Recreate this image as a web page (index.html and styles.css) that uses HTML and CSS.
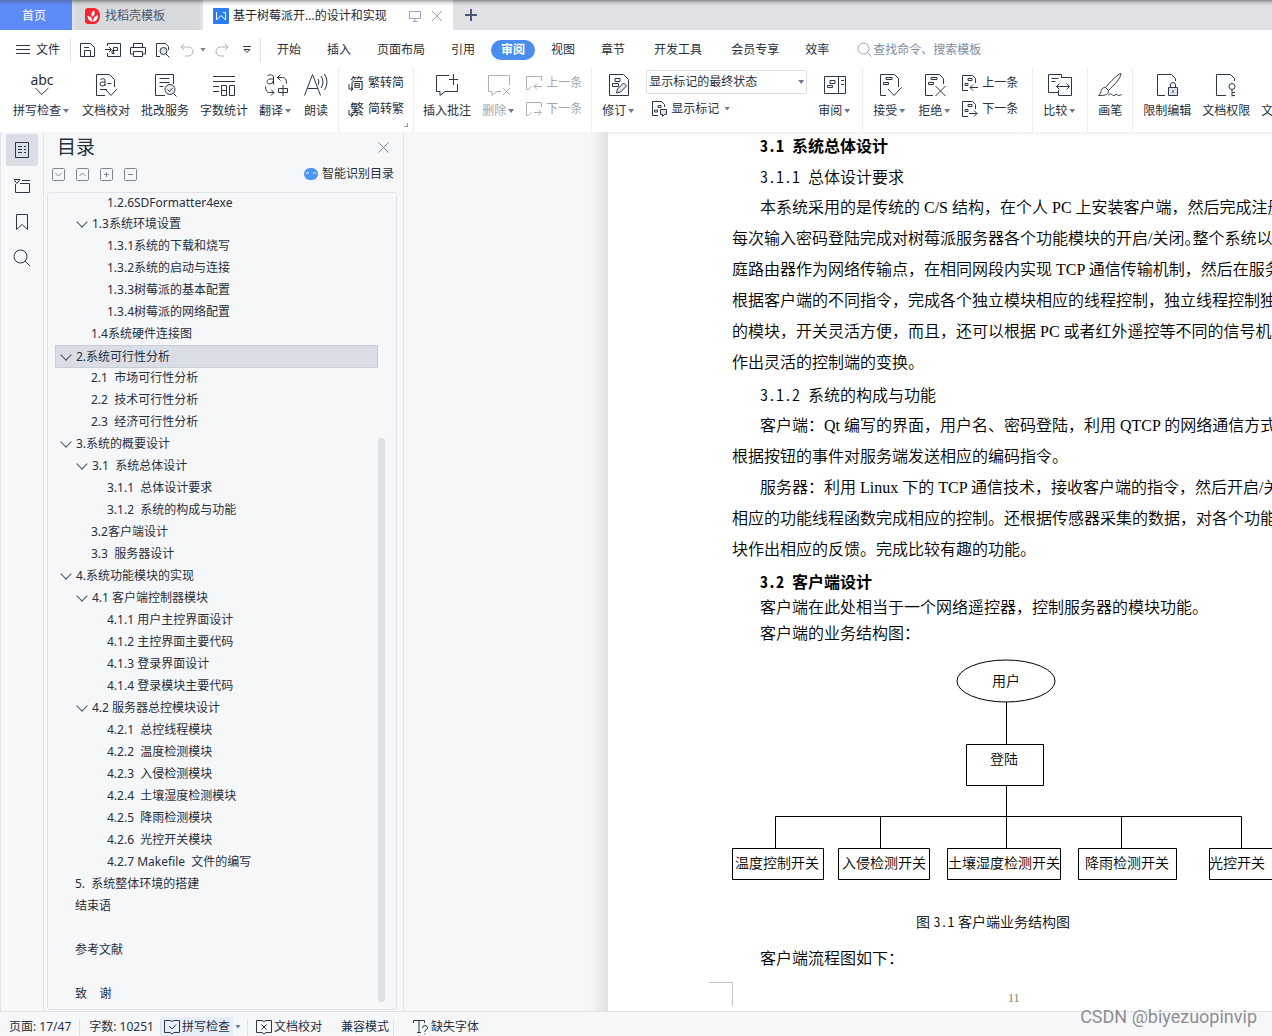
FILE: index.html
```html
<!DOCTYPE html>
<html lang="zh-CN">
<head>
<meta charset="utf-8">
<title>基于树莓派开发的设计和实现</title>
<link rel="stylesheet" href="styles.css">
</head>
<body>
<div class="app">
  <header class="tabstrip">
    <button class="tab home">首页</button>
    <button class="tab docer">
      <svg width="16" height="16" viewBox="0 0 16 16"><path d="M3 0h6a6 8 0 010 16H3a3 3 0 01-3-3V3a3 3 0 013-3z" fill="#f5242e"/><path d="M7.500 14C4 13 2.500 10.500 2.500 8 5.500 8.500 7.500 10 7.500 14ZM7 9C5.500 6.500 6.500 4 9 2.500 10.500 5 9.500 7.500 7 9ZM8 14C8 10.500 9.500 8 13 7 13 10.500 11.500 13 8 14Z" fill="#fff"/></svg>
      找稻壳模板
    </button>
    <div class="tab current">
      <svg width="16" height="16" viewBox="0 0 16 16"><rect width="16" height="16" rx="1" fill="#2b7cf0"/><path d="M3.500 4v8l4.500-4.500 4.500 4.500V4.500H10" fill="none" stroke="#fff"/></svg>
      <span class="tab-title">基于树莓派开...的设计和实现</span>
      <svg class="faint" width="12" height="12" viewBox="0 0 12 12"><path d="M.5 1.500h11v7H.5zM6 8.500v3M3.500 11.500h5"/></svg>
      <button class="plain" aria-label="关闭标签"><svg class="faint" width="12" height="12" viewBox="0 0 12 12"><path d="M1 1l10 10M11 1L1 11"/></svg></button>
    </div>
    <button class="plain add" aria-label="新建标签"><svg width="12" height="12" viewBox="0 0 12 12"><path d="M6 0v12M0 6h12" stroke="#4b5875" stroke-width="2"/></svg></button>
  </header>

  <nav class="menubar">
    <button class="plain file"><svg width="14" height="12" viewBox="0 0 14 12"><path d="M0 1.500h14M0 5.500h14M0 9.500h14"/></svg>文件</button>
    <div class="quick">
      <button class="plain" aria-label="保存"><svg width="16" height="16" viewBox="0 0 16 16"><path d="M.5 1.500h10l4 4v9H.5zM4.500 14V8.500h6V14M4 5.500h5"/></svg></button>
      <button class="plain" aria-label="输出为PDF"><svg width="16" height="16" viewBox="0 0 16 16"><path d="M2.500 4V1.500h13v13h-13V11M0 7.500h6M4 5l2.500 2.500L4 10M8.500 12V5.500h4v3H7v3h2.500"/></svg></button>
      <button class="plain" aria-label="打印"><svg width="16" height="16" viewBox="0 0 16 16"><path d="M3.500 5V1.500h9V5M3.500 12h-3V5.500h15V12h-3M3.500 9.500h9v5h-9z"/></svg></button>
      <button class="plain" aria-label="打印预览"><svg width="16" height="16" viewBox="0 0 16 16"><path d="M5 14.500H1.500v-13h9l3 3V8"/><circle cx="8.500" cy="9" r="3.500" fill="#dde0e5"/><path d="M11 12l3.500 3.500"/></svg></button>
      <button class="plain off" aria-label="撤销"><svg width="14" height="14" viewBox="0 0 14 14"><path d="M4 1L1 4l3 3M1 4h7.500a4.500 4.500 0 010 9H5"/></svg></button>
      <i class="caret"></i>
      <button class="plain off" aria-label="恢复"><svg width="14" height="14" viewBox="0 0 14 14"><path d="M10 1l3 3-3 3M13 4H5.500a4.500 4.500 0 000 9H9"/></svg></button>
      <button class="plain" aria-label="自定义快速访问"><svg width="8" height="8" viewBox="0 0 8 8"><path d="M0 .5h8M1 3.500h6l-3 3z"/></svg></button>
    </div>
    <div class="menus">
      <button class="plain">开始</button><button class="plain">插入</button><button class="plain">页面布局</button><button class="plain">引用</button><button class="plain pill">审阅</button><button class="plain">视图</button><button class="plain">章节</button><button class="plain wide">开发工具</button><button class="plain">会员专享</button><button class="plain">效率</button>
    </div>
    <label class="search"><svg width="15" height="15" viewBox="0 0 15 15"><circle cx="6.500" cy="6.500" r="5.500"/><path d="M10.500 10.500l4 4"/></svg><input type="text" placeholder="查找命令、搜索模板" aria-label="查找命令"></label>
  </nav>

  <section class="ribbon">
    <div class="group first">
      <button class="big"><span class="abc">abc<svg width="16" height="9" viewBox="0 0 16 9"><path d="M1.500 1l6 6.500L14.500 1"/></svg></span><b>拼写检查<i class="caret"></i></b></button>
      <button class="big"><svg width="24" height="24" viewBox="0 0 24 24"><path d="M11 22.500H2.500v-21h13l5 5V14M12 17l5 5.500 6-6.500M6 16.500h7M6.500 6.500q3-2 4.500 0V13M11 9H8Q6 9 6 11t2 2q3 0 3-2M13.500 10.500h4"/></svg><b>文档校对</b></button>
      <button class="big"><svg width="24" height="24" viewBox="0 0 24 24"><path d="M12 22.500H2.500v-21h18V11M6.500 5.500h10M6.500 9.500h10M6.500 13.500h4"/><circle cx="17" cy="16.500" r="5" fill="#e6e9ee"/><path d="M20.500 20.500l3 3M14.500 16.500l2 2 3-3.500"/></svg><b>批改服务</b></button>
      <button class="big"><svg width="24" height="24" viewBox="0 0 24 24"><path d="M1 3.500h22M1 8.500h22M1 13.500h6M1 18.500h6M9.500 12.500h5v10h-5zM9.500 17.500h5M17.500 12.500h5v10h-5z"/></svg><b>字数统计</b></button>
      <button class="big"><svg width="24" height="24" viewBox="0 0 24 24"><path d="M3.500 2.500q5-2 6 1.500V11.500M9.500 6H6C2.500 6 2 11 5.500 11q4 0 4-4M16.500 1.500l-3 3 3 3M13.500 4.500h5q4 0 4 6M1.500 13.500q0 6 4 6h4.500M7 16.500l3 3-3 3M14.500 15.500h9v4h-9zM19 12v11"/></svg><b>翻译<i class="caret"></i></b></button>
      <button class="big"><svg width="24" height="24" viewBox="0 0 24 24"><path d="M.5 22.500L8.500 1.500l8 21M3.500 15.500h10.500M14 6q2 3 0 6M17 3q4 6 0 12M20.500 1q5 8 0 16"/></svg><b>朗读</b></button>
    </div>
    <div class="group narrow launch">
      <div class="stack">
        <button class="small"><span class="glyph">简<svg width="6" height="8" viewBox="0 0 6 8"><path d="M1 0v5h4M3 3l2 2-2 2"/></svg></span>繁转简</button>
        <button class="small"><span class="glyph">繁<svg width="6" height="8" viewBox="0 0 6 8"><path d="M1 0v5h4M3 3l2 2-2 2"/></svg></span>简转繁</button>
      </div>
    </div>
    <div class="group narrow">
      <button class="big"><svg width="24" height="24" viewBox="0 0 24 24"><path d="M14 2.500H1.500v16H5v4l5-4h12.500V11M14 6.500h9M18.500 1v11"/></svg><b>插入批注</b></button>
      <button class="big off"><svg width="24" height="24" viewBox="0 0 24 24"><path d="M22.500 12V2.500h-21v16H5v4l5-4h4M16 15l7 7M23 15l-7 7"/></svg><b>删除<i class="caret"></i></b></button>
      <div class="stack">
        <button class="small off"><svg width="16" height="16" viewBox="0 0 16 16"><path d="M15.500 6V1.500H.5v13H2.500l3-3M8 11.500h8M11 8.500l-3 3 3 3"/></svg>上一条</button>
        <button class="small off"><svg width="16" height="16" viewBox="0 0 16 16"><path d="M15.500 6V1.500H.5v13H2.500l3-3M8 11.500h7M12 8.500l3 3-3 3"/></svg>下一条</button>
      </div>
    </div>
    <div class="group">
      <button class="big"><svg width="24" height="24" viewBox="0 0 24 24"><path d="M2.500 1.500h14l5 5v16h-19zM8 5.500h5v3H8zM5.500 10.500h6v3h-6z"/><path d="M9.500 20l1-4 6-6 3 3-6 6z" fill="#dfe2e8"/></svg><b>修订<i class="caret"></i></b></button>
      <div class="stack">
        <label class="picker"><select aria-label="标记显示方式"><option>显示标记的最终状态</option></select><i class="caret"></i></label>
        <button class="small inset"><svg width="16" height="16" viewBox="0 0 16 16"><path d="M7 14.500H1.500V.5h9l3 3V6M7 4.500h3v2H7zM3.500 9h3v2h-3z"/><path d="M9.500 8.500h6v5h-2l-2 2v-2h-2z" fill="#dfe2e8"/></svg>显示标记<i class="caret"></i></button>
      </div>
      <button class="big"><svg width="24" height="24" viewBox="0 0 24 24"><path d="M1.500 3.500h21v17h-21zM15.500 3.500v17M7 7.500h5v3H7zM4.500 12.500h5v2h-5zM18 7.500h3M18 11.500h3"/></svg><b>审阅<i class="caret"></i></b></button>
    </div>
    <div class="group track">
      <button class="big"><svg width="24" height="24" viewBox="0 0 24 24"><path d="M8 22.500H2.500v-21h14l4 4V14M8 4.500h6v2H8zM5.500 9.500h5v2h-5zM10 16l6 6.500 7.500-8"/></svg><b>接受<i class="caret"></i></b></button>
      <button class="big"><svg width="24" height="24" viewBox="0 0 24 24"><path d="M10 22.500H2.500v-21h14l4 4V11M8 4.500h6v2H8zM5.500 9.500h5v2h-5zM12.500 13l10 10M22.500 13l-10 10"/></svg><b>拒绝<i class="caret"></i></b></button>
      <div class="stack">
        <button class="small"><svg width="16" height="16" viewBox="0 0 16 16"><path d="M6 15.500H.5V.5h10l3 3V8M6 3.500h4v2H6zM3 8.500h3v2H3zM8 12.500h8M11 9.500l-3 3 3 3"/></svg>上一条</button>
        <button class="small"><svg width="16" height="16" viewBox="0 0 16 16"><path d="M6 15.500H.5V.5h10l3 3V8M6 3.500h4v2H6zM3 8.500h3v2H3zM7 12.500h8M12 9.500l3 3-3 3"/></svg>下一条</button>
      </div>
    </div>
    <div class="group">
      <button class="big"><svg width="24" height="24" viewBox="0 0 24 24"><path d="M10 19.500H.5v-18h13V5M3.500 5.500h7M3.500 8.500h4M14 4.500h9.500v18h-13V17M8.500 13.500h13M11.500 10.500l-3 3 3 3M18.500 10.500l3 3-3 3"/></svg><b>比较<i class="caret"></i></b></button>
    </div>
    <div class="group">
      <button class="big"><svg width="24" height="24" viewBox="0 0 24 24"><path d="M23 .5C20 1 12 9 7.500 14.500l3 3C16 12 23 5 23 .5ZM7.500 14.500c-6 0-3 5-7 8 5 0 10 0 10-5M10 22.500c2-3 4-1 5 0s3-2 4-1 2 1.500 4.500 0"/></svg><b>画笔</b></button>
    </div>
    <div class="group last">
      <button class="big"><svg width="24" height="24" viewBox="0 0 24 24"><path d="M10 22.500H2.500v-21h14l4 4V8M15.500 14v-2a2.500 2.500 0 015 0v2"/><path d="M13.500 14.500h9v8h-9z" fill="#dfe2e8"/><path d="M18 17v3"/></svg><b>限制编辑</b></button>
      <button class="big"><svg width="24" height="24" viewBox="0 0 24 24"><path d="M12 22.500H2.500v-21h14l4 4V8"/><circle cx="18" cy="13.500" r="3"/><path d="M18 16.500v7M18 19.500h3M18 22.500h3"/></svg><b>文档权限</b></button>
      <button class="big"><svg width="24" height="24" viewBox="0 0 24 24"><path d="M12 22.500H2.500v-21h14l4 4V9"/></svg><b>文档认证</b></button>
    </div>
  </section>

  <main class="work">
    <aside class="rail">
      <button class="plain on" aria-label="目录"><svg width="16" height="16" viewBox="0 0 16 16"><path d="M1.500.5h13v15h-13zM4 4.500h4M4 7.500h4M4 10.500h4M10 4.500h2M10 7.500h2M10 10.500h2"/></svg></button>
      <button class="plain" aria-label="章节"><svg width="16" height="16" viewBox="0 0 16 16"><path d="M0 1.500h6l-3 4zM1.500 6v8.500h14v-9H6M8 2.500h8"/></svg></button>
      <button class="plain" aria-label="书签"><svg width="16" height="18" viewBox="0 0 16 18"><path d="M2.500 1.500h11v15L8 11.500l-5.500 5z"/></svg></button>
      <button class="plain" aria-label="查找"><svg width="18" height="18" viewBox="0 0 18 18"><circle cx="7.500" cy="7.500" r="6.500"/><path d="M12 12l5 5"/></svg></button>
    </aside>

    <aside class="outline">
      <div class="outline-head"><h2>目录</h2><button class="plain" aria-label="关闭目录"><svg width="11" height="11" viewBox="0 0 11 11"><path d="M.5.5l10 10M10.500.5l-10 10"/></svg></button></div>
      <div class="outline-tools">
        <button class="plain" aria-label="展开"><svg width="13" height="13" viewBox="0 0 13 13"><rect x=".5" y=".5" width="12" height="12" rx="1"/><path d="M3.500 5l3 3 3-3"/></svg></button>
        <button class="plain" aria-label="收起"><svg width="13" height="13" viewBox="0 0 13 13"><rect x=".5" y=".5" width="12" height="12" rx="1"/><path d="M3.500 8l3-3 3 3"/></svg></button>
        <button class="plain" aria-label="升级"><svg width="13" height="13" viewBox="0 0 13 13"><rect x=".5" y=".5" width="12" height="12" rx="1"/><path d="M4 6.500h5M6.500 4v5"/></svg></button>
        <button class="plain" aria-label="降级"><svg width="13" height="13" viewBox="0 0 13 13"><rect x=".5" y=".5" width="12" height="12" rx="1"/><path d="M4 6.500h5"/></svg></button>
        <a href="#" class="smart"><svg width="14" height="12" viewBox="0 0 14 12"><rect width="14" height="12" rx="6" fill="#4a94f5" stroke="none"/><path d="M2 5.500q1.500-2 3 0M9 5.500q1.500-2 3 0" stroke="#fff"/></svg>智能识别目录</a>
      </div>
      <div class="tree-box">
        <ul class="tree">
          <li class="l3">1.2.6SDFormatter4exe</li>
          <li class="l2 open">1.3系统环境设置</li>
          <li class="l3">1.3.1系统的下载和烧写</li>
          <li class="l3">1.3.2系统的启动与连接</li>
          <li class="l3">1.3.3树莓派的基本配置</li>
          <li class="l3">1.3.4树莓派的网络配置</li>
          <li class="l2">1.4系统硬件连接图</li>
          <li class="l1 open picked">2.系统可行性分析</li>
          <li class="l2">2.1  市场可行性分析</li>
          <li class="l2">2.2  技术可行性分析</li>
          <li class="l2">2.3  经济可行性分析</li>
          <li class="l1 open">3.系统的概要设计</li>
          <li class="l2 open">3.1  系统总体设计</li>
          <li class="l3">3.1.1  总体设计要求</li>
          <li class="l3">3.1.2  系统的构成与功能</li>
          <li class="l2">3.2客户端设计</li>
          <li class="l2">3.3  服务器设计</li>
          <li class="l1 open">4.系统功能模块的实现</li>
          <li class="l2 open">4.1 客户端控制器模块</li>
          <li class="l3">4.1.1 用户主控界面设计</li>
          <li class="l3">4.1.2 主控界面主要代码</li>
          <li class="l3">4.1.3 登录界面设计</li>
          <li class="l3">4.1.4 登录模块主要代码</li>
          <li class="l2 open">4.2 服务器总控模块设计</li>
          <li class="l3">4.2.1  总控线程模块</li>
          <li class="l3">4.2.2  温度检测模块</li>
          <li class="l3">4.2.3  入侵检测模块</li>
          <li class="l3">4.2.4  土壤湿度检测模块</li>
          <li class="l3">4.2.5  降雨检测模块</li>
          <li class="l3">4.2.6  光控开关模块</li>
          <li class="l3">4.2.7 Makefile  文件的编写</li>
          <li class="l1">5.  系统整体环境的搭建</li>
          <li class="l1">结束语</li>
          <li class="l1"></li>
          <li class="l1">参考文献</li>
          <li class="l1"></li>
          <li class="l1">致    谢</li>
        </ul>
        <div class="scroll"><div class="thumb"></div></div>
      </div>
    </aside>

    <div class="gutter"></div>

    <article class="page">
      <h3>3.1 系统总体设计</h3>
      <h4>3.1.1 总体设计要求</h4>
      <p>本系统采用的是传统的 C/S 结构，在个人 PC 上安装客户端，然后完成注册，<br>每次输入密码登陆完成对树莓派服务器各个功能模块的开启/关闭<span class="half">。</span>整个系统以家<br>庭路由器作为网络传输点，在相同网段内实现 TCP 通信传输机制，然后在服务器<br>根据客户端的不同指令，完成各个独立模块相应的线程控制，独立线程控制独立<br>的模块，开关灵活方便，而且，还可以根据 PC 或者红外遥控等不同的信号机制<br>作出灵活的控制端的变换。</p>
      <h4>3.1.2 系统的构成与功能</h4>
      <p>客户端：Qt 编写的界面，用户名、密码登陆，利用 QTCP 的网络通信方式，<br>根据按钮的事件对服务端发送相应的编码指令。</p>
      <p>服务器：利用 Linux 下的 TCP 通信技术，接收客户端的指令，然后开启/关闭<br>相应的功能线程函数完成相应的控制。还根据传感器采集的数据，对各个功能模<br>块作出相应的反馈。完成比较有趣的功能。</p>
      <h3 class="next">3.2 客户端设计</h3>
      <p class="close">客户端在此处相当于一个网络遥控器，控制服务器的模块功能。</p>
      <p class="close">客户端的业务结构图：</p>
      <svg class="diagram" width="600" height="236" viewBox="0 0 600 236">
        <ellipse cx="274" cy="34" rx="49" ry="21"/>
        <path d="M274.500 55v42M234.500 97.500h77v41h-77zM274.500 138v63M43.500 201v-31.500h466V201M148.500 169v32M389.500 169v32M.5 201.500h91v31H.5zM106.500 201.500h91v31h-91zM215.500 201.500h113v31h-113zM346.500 201.500h98v31h-98zM477.500 201.500h91v31h-91z"/>
        <text x="274" y="39">用户</text>
        <text x="272" y="117">登陆</text>
        <text x="45" y="221">温度控制开关</text>
        <text x="152" y="221">入侵检测开关</text>
        <text x="272" y="221">土壤湿度检测开关</text>
        <text x="395" y="221">降雨检测开关</text>
        <text x="505" y="221">光控开关</text>
      </svg>
      <p class="caption">图 <span class="no">3.1</span> 客户端业务结构图</p>
      <p class="flow">客户端流程图如下：</p>
      <div class="foot"><span class="crop"></span><span class="num">11</span></div>
    </article>
  </main>

  <footer class="status">
    <span class="cell">页面: 17/47</span>
    <span class="cell count">字数: 10251</span>
    <button class="plain lit"><svg width="16" height="16" viewBox="0 0 16 16"><path d="M8 2.500l-2-1H.5v12H6l2 1.500 2-1.500h5.500v-12H10zM5 7l3 3 4-4.500"/></svg>拼写检查</button>
    <span class="cell drop"><i class="caret"></i></span>
    <button class="plain proof"><svg width="16" height="16" viewBox="0 0 16 16"><path d="M8 2.500l-2-1H.5v12H6l2 1.500 2-1.500h5.500v-12H10zM5.500 5.500l5 5M10.500 5.500l-5 5"/></svg>文档校对</button>
    <span class="cell compat">兼容模式</span>
    <button class="plain missing"><svg width="16" height="16" viewBox="0 0 16 16"><path d="M.5 4V1.500h11V4M6 1.500v12M4 13.500h4M9.500 9q0-2.500 2.500-2.500T14.500 9q0 1.500-2.500 2.500V13M12 14.500v1"/></svg>缺失字体</button>
  </footer>
  <div class="mark">CSDN @biyezuopinvip</div>
</div>
</body>
</html>
```

FILE: styles.css
```css
* { box-sizing: border-box; }

body {
  margin: 0;
  color: #262f40;
  font: 12px/18px "Noto Sans", "Noto Sans CJK SC", sans-serif;
}

svg { display: block; flex: none; fill: none; stroke: #2c3648; }
button, input, select { font: inherit; color: inherit; }

.app {
  position: relative;
  display: flex;
  flex-direction: column;
  height: 100vh;
  overflow: hidden;
  white-space: nowrap;
}

.plain, .tab, .big, .small {
  display: flex;
  align-items: center;
  flex: none;
  padding: 0;
  border: 0;
  background: none;
}

.caret {
  flex: none;
  width: 6px;
  height: 4px;
  background: #6f7a8e;
  clip-path: polygon(0 0, 100% 0, 50% 100%);
}

.off { color: #a3a7af; }
.off svg { stroke: #adb0b7; }

/* Document tabs */
.tabstrip {
  display: flex;
  gap: 3px;
  flex: none;
  height: 30px;
  background: linear-gradient(#8b8c8e, #c8c9cc 3px, #e1e2e6 6px);
}
.tabstrip svg { stroke: none; }
.tab { padding-top: 2px; }
.home {
  width: 72px;
  padding-left: 22px;
  color: #fff;
  background: linear-gradient(#5571b8, #5d8af6 5px);
}
.docer {
  gap: 4px;
  width: 125px;
  padding-left: 10px;
  color: #4d5768;
  background: linear-gradient(#85868a, #c3c4c8 3px, #d7d9dd 6px);
}
.current {
  gap: 4px;
  width: 250px;
  padding: 2px 10px 0;
  background: linear-gradient(#a5a5a5, #e4e4e4 3px, #fff 6px);
  color: #1d2533;
}
.tab-title { flex: 1; }
.tabstrip .faint { stroke: #9aa5bd; }
.current .plain { margin-left: 6px; }
.add { padding-left: 9px; }

/* Menu bar */
.menubar {
  display: flex;
  align-items: center;
  flex: none;
  height: 38px;
  padding-top: 1px;
  background: #fff;
}
.file { gap: 6px; width: 71px; height: 24px; padding-left: 16px; border-right: 1px solid #dfe1e6; }
.quick {
  display: flex;
  align-items: center;
  gap: 9px;
  width: 190px;
  height: 24px;
  padding-left: 9px;
  border-right: 1px solid #dfe1e6;
}
.quick .caret { margin-left: -3px; }
.quick .caret + button { margin-right: 5px; }
.menus { display: flex; align-items: center; padding-left: 3px; }
.menus .plain { padding: 0 13px; }
.menus .wide { padding: 0 16px; }
.menus .pill {
  height: 20px;
  margin: 0 3px;
  padding: 0 10px;
  border-radius: 10px;
  background: #4a8df0;
  color: #fff;
  font-weight: bold;
}
.search { display: flex; align-items: center; flex: 1; gap: 1px; padding-left: 15px; }
.search svg { stroke: #98a2b8; }
.search input { flex: 1; min-width: 0; padding: 0; border: 0; outline: 0; background: none; }
.search input::placeholder { color: #7f8aa0; opacity: 1; }

/* Ribbon */
.ribbon {
  display: flex;
  flex: none;
  height: 64px;
  overflow: hidden;
  background: #fff;
}
.group {
  display: flex;
  flex: none;
  gap: 11px;
  padding: 0 10px;
  border-right: 1px solid #eceef1;
}
.group.first { padding: 0 10px 0 13px; }
.group.narrow { padding: 0 9px; }
.group.track { padding-right: 14px; }
.group.last { border: 0; }
.launch {
  background: linear-gradient(#8e97a6, #8e97a6) right 5px bottom 5px / 1px 4px no-repeat,
    linear-gradient(#8e97a6, #8e97a6) right 5px bottom 5px / 4px 1px no-repeat;
}
.big { flex-direction: column; gap: 5px; padding-top: 5px; }
.big b { display: flex; align-items: center; font-weight: normal; }
.big .caret { margin: 0 2px; }
.abc {
  display: flex;
  flex-direction: column;
  align-items: center;
  height: 24px;
  font-size: 14px;
  line-height: 14px;
}
.stack { display: flex; flex-direction: column; gap: 2px; padding-top: 2px; }
.big + .stack { margin-left: -1px; }
.small { gap: 4px; height: 24px; padding-top: 1px; }
.small .caret { margin-left: 1px; }
.inset { padding-left: 5px; }
.glyph { display: flex; justify-content: flex-end; width: 16px; font-size: 14px; position: relative; }
.glyph svg { position: absolute; left: 0; bottom: 0; }
.picker { position: relative; display: flex; }
.picker select {
  width: 161px;
  height: 24px;
  padding: 0 2px;
  appearance: none;
  border: 1px solid #dcdfe4;
  border-radius: 2px;
  background: #fff;
}
.picker .caret { position: absolute; right: 3px; top: 10px; }

/* Work area */
.work { display: flex; flex: 1; min-height: 0; background: #f6f7f9; }

.rail {
  display: flex;
  flex-direction: column;
  align-items: center;
  gap: 4px;
  flex: none;
  width: 44px;
  padding-top: 2px;
  border-left: 1px solid #e2e4e8;
  border-right: 1px solid #e2e4e8;
}
.rail .plain { justify-content: center; width: 32px; height: 32px; border-radius: 2px; }
.rail .on { background: #d9dee6; }

.outline {
  display: flex;
  flex-direction: column;
  flex: none;
  width: 360px;
  padding: 0 6px 0 3px;
  border-right: 1px solid #e2e4e8;
}
.outline-head { display: flex; align-items: center; justify-content: space-between; height: 30px; padding: 0 8px 0 10px; }
.outline-head svg { stroke: #7d8696; }
h2 { margin: 0; font-size: 19px; font-weight: normal; line-height: 30px; }
.outline-tools { display: flex; align-items: center; gap: 11px; height: 30px; padding: 0 3px 6px 5px; }
.outline-tools svg { stroke: #7d8696; }
.outline-tools .smart {
  display: flex;
  align-items: center;
  gap: 4px;
  margin-left: auto;
  color: inherit;
  text-decoration: none;
}
.tree-box {
  display: flex;
  flex: 1;
  min-height: 0;
  margin-bottom: 1px;
  padding-left: 7px;
  border: 1px solid #e0e3ea;
  border-radius: 3px;
}
.tree { flex: 1; margin: 0; padding: 0; list-style: none; overflow: hidden; }
.tree li {
  display: flex;
  align-items: center;
  height: 22px;
  border: 1px solid transparent;
  line-height: 20px;
  white-space: pre;
}
.tree li:first-child { height: 20px; }
.tree li::before { content: ""; width: 19px; }
.tree .open::before {
  width: 7px;
  height: 7px;
  margin: -4px 6px 0;
  border: solid #4a5467;
  border-width: 0 1px 1px 0;
  transform: rotate(45deg);
}
.tree .l2 { padding-left: 16px; }
.tree .l3 { padding-left: 32px; }
.tree .picked { height: 23px; margin-bottom: -1px; border-color: #c9ced6; background: #d9dee6; }
.scroll { flex: none; width: 18px; padding-top: 245px; padding-bottom: 7px; }
.thumb { width: 7px; height: 100%; border-radius: 4px; background: #dee2e6; }

.gutter { flex: none; width: 204px; background: linear-gradient(to left, #dfe1e3, #f6f7f9 18px); }

/* Paper */
.page {
  flex: 1;
  min-width: 0;
  padding-left: 124px;
  overflow: hidden;
  background: linear-gradient(#f0f0f0, #fff 4px);
  color: #000;
  font-family: "Liberation Serif", "Noto Sans CJK SC", serif;
  font-size: 16px;
  line-height: 31px;
}
.page h3, .page h4 {
  margin: 0;
  padding-left: 28px;
  font-family: "Noto Sans CJK SC", sans-serif;
  font-size: 16px;
  font-feature-settings: "hwid";
}
.page h3 { margin-bottom: 2px; line-height: 26px; }
.page h3.next { margin: 3px 0 1px; }
.page h4 { font-weight: 350; line-height: 32px; }
.page p { margin: 0; text-indent: 28px; font-weight: 350; }
.page p.close { line-height: 26px; }
.half { font-feature-settings: "halt"; }
.diagram { stroke: #000; }
.diagram text {
  fill: #000;
  stroke: none;
  font-family: "Noto Sans CJK SC", sans-serif;
  font-size: 14px;
  font-weight: 350;
  text-anchor: middle;
}
.page .caption {
  padding-top: 23px;
  text-indent: 184px;
  font-size: 14px;
  line-height: 30px;
}
.caption .no { font-family: "Noto Sans CJK SC", sans-serif; font-feature-settings: "hwid"; }
.page .flow { padding-top: 5px; }
.foot { display: flex; padding-top: 8px; }
.crop { width: 24px; height: 24px; margin-left: -23px; border-top: 1px solid #c4c4c4; border-right: 1px solid #c4c4c4; }
.num { padding-left: 275px; color: #8a7c6c; font-size: 12px; line-height: 33px; }

/* Status bar */
.status {
  display: flex;
  align-items: center;
  flex: none;
  height: 25px;
  padding-top: 5px;
  border-top: 1px solid #e0e2e6;
  background: #f6f7f9;
}
.cell { height: 16px; line-height: 16px; padding: 0 8px 0 9px; border-right: 1px solid #dfe1e5; }
.count { padding-right: 6px; }
.status .plain { gap: 2px; height: 20px; }
.lit { padding: 0 3px; background: #e6eefa; }
.drop { display: flex; align-items: center; padding: 0 6px 0 2px; }
.proof { padding-left: 8px; }
.compat { padding: 0 4px 0 19px; }
.missing { padding-left: 19px; }

.mark {
  position: absolute;
  right: 15px;
  bottom: 8px;
  color: #8d8f93;
  font: 18px/22px Roboto, sans-serif;
}
```
